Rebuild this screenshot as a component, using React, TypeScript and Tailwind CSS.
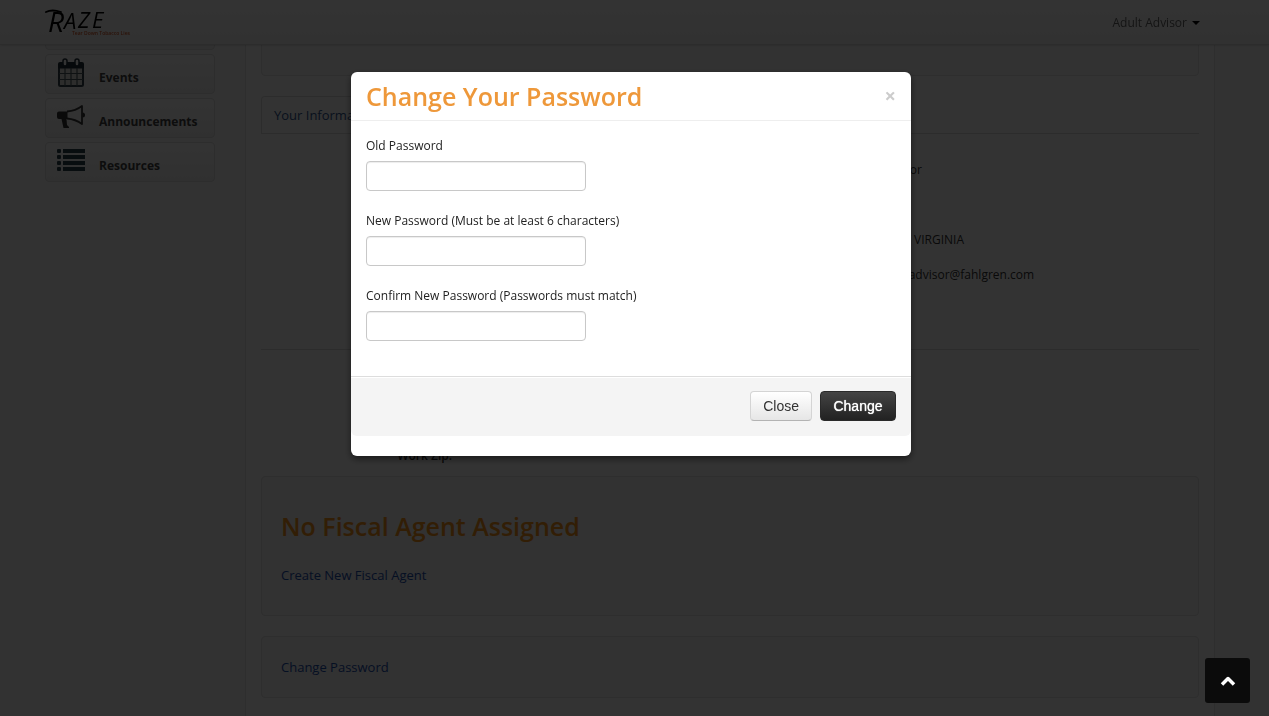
import type { ReactNode } from "react";

const fields = [
  { id: "old-password", label: "Old Password" },
  { id: "new-password", label: "New Password (Must be at least 6 characters)" },
  { id: "confirm-password", label: "Confirm New Password (Passwords must match)" },
];

function CalendarIcon() {
  return (
    <svg width="28" height="30" viewBox="0 0 28 30" aria-hidden="true">
      <rect x="2" y="6" width="24" height="22" rx="1.5" fill="#dfe2da" stroke="#33424a" strokeWidth="2" />
      <path d="M1 10.500V6a2 2 0 0 1 2-2h22a2 2 0 0 1 2 2v4.500z" fill="#22303a" />
      <path d="M8 10v18M14 10v18M20 10v18M2 15.500h24M2 21.500h24" stroke="#4c5a60" strokeWidth="1.2" />
      <rect x="6" y="1" width="4" height="7" rx="2" fill="#fff" stroke="#22303a" strokeWidth="1.5" />
      <rect x="18" y="1" width="4" height="7" rx="2" fill="#fff" stroke="#22303a" strokeWidth="1.5" />
    </svg>
  );
}

function MegaphoneIcon() {
  return (
    <svg width="28" height="24" viewBox="0 0 28 24" aria-hidden="true">
      <path d="M10 6.500C16 6 21 4 25 1v18c-4-3-9-5-15-5.500" fill="none" stroke="#3a3a3a" strokeWidth="1.8" strokeLinejoin="round" />
      <path d="M2 6.500h8.500v7.500H9.500l.5 6 2 2v1H6.500l-2-9H2a2 2 0 0 1-2-2v-3.500a2 2 0 0 1 2-2z" fill="#333" />
      <path d="M25.500 7.500q2.500 0 2.500 2.500t-2.500 2.500z" fill="#333" />
    </svg>
  );
}

function ListIcon() {
  return (
    <svg width="28" height="26" viewBox="0 0 28 26" aria-hidden="true" fill="#2c404e">
      {[1, 7, 13, 19].map((y) => (
        <g key={y}>
          <rect x="0" y={y} width="4" height="4" rx="1" />
          <rect x="6" y={y} width="22" height="4" />
        </g>
      ))}
    </svg>
  );
}

function Logo() {
  return (
    <svg width="90" height="36" viewBox="0 0 90 36" role="img" aria-label="Raze">
      <path d="M1 8C5 6 10 6 16 8" fill="none" stroke="#000" strokeWidth="1.800" strokeLinecap="round" />
      <g fontFamily="Open Sans, sans-serif" fontStyle="italic" fill="#000">
        <text x="3" y="28" fontSize="28" fontWeight="500">R</text>
        <text x="19" y="25" fontSize="22">A</text>
        <text x="33" y="24" fontSize="22">Z</text>
        <text x="47" y="24" fontSize="22">E</text>
      </g>
      <text x="27" y="31" fontFamily="Open Sans, sans-serif" fontSize="5" fontWeight="600" fill="#d85a2c">
        Tear Down Tobacco Lies
      </text>
    </svg>
  );
}

function NavCard({ icon, children }: { icon?: ReactNode; children: ReactNode }) {
  return (
    <a
      href="#"
      className="flex h-10 items-start rounded border border-[#dedede] bg-linear-to-b from-white to-[#f0f0f0] pl-[11px] text-[12px] font-bold text-[#444]"
    >
      <span className="flex h-9 w-[42px] items-center">{icon}</span>
      <span className="pt-[14px] leading-[18px]">{children}</span>
    </a>
  );
}

function Detail({ label, children }: { label: string; children?: ReactNode }) {
  return (
    <div className="flex gap-5">
      <dt className="w-40 text-right font-semibold">{label}</dt>
      <dd>{children}</dd>
    </div>
  );
}

function Well({ className, children }: { className: string; children?: ReactNode }) {
  return <section className={`rounded border border-[#e3e3e3] bg-[#f7f7f7] px-[19px] ${className}`}>{children}</section>;
}

export default function App() {
  return (
    <div className="h-screen overflow-hidden bg-[#fafafa] font-['Open_Sans',sans-serif] text-[12px] leading-5 text-[#333]">
      <header className="fixed inset-x-0 top-0 z-10 border-b border-[#d9d9d9] bg-linear-to-b from-white to-[#f4f4f4] pr-[9px] shadow-sm">
        <div className="mx-auto flex h-11 max-w-[1170px] items-center justify-between">
          <a href="#" className="block">
            <Logo />
          </a>
          <button type="button" className="mt-[2px] mr-[15px] flex items-center gap-[5px] text-[#666]">
            Adult Advisor
            <span className="border-x-4 border-t-4 border-x-transparent border-t-black" />
          </button>
        </div>
      </header>

      <div className="pr-[9px]">
        <div className="mx-auto flex max-w-[1170px]">
          <nav className="mr-[30px] flex w-[170px] flex-col gap-1 pt-[10px]">
            <NavCard>Dashboard</NavCard>
            <NavCard icon={<CalendarIcon />}>Events</NavCard>
            <NavCard icon={<MegaphoneIcon />}>Announcements</NavCard>
            <NavCard icon={<ListIcon />}>Resources</NavCard>
          </nav>

          <main className="min-w-0 flex-1 border-x border-[#e3e3e3] bg-white px-[15px]">
            <Well className="h-[76px]" />
            <div className="mt-5 flex border-b border-[#ddd]">
              <a href="#" className="rounded-t border-x border-t border-[#ddd] px-3 py-2 text-[13px] text-[#2f5590]">
                Your Information
              </a>
            </div>
            <dl className="grid grid-cols-2 border-b border-[#ddd] pt-[26px] pb-16">
              <div className="flex flex-col gap-[15px] pl-[31px]">
                <Detail label="First Name:">Adult</Detail>
                <Detail label="Address:" />
                <Detail label="City:" />
                <Detail label="Zip:" />
              </div>
              <div className="-ml-[30px] flex flex-col gap-[15px]">
                <Detail label="Last Name:">Advisor</Detail>
                <Detail label="Address 2:">&nbsp;</Detail>
                <Detail label="State:">WEST VIRGINIA</Detail>
                <Detail label="Email:">adultadvisor@fahlgren.com</Detail>
              </div>
            </dl>
            <dl className="flex flex-col gap-[15px] pt-[26px] pb-[10px] pl-[31px]">
              <Detail label="Work Address:" />
              <Detail label="Work City:" />
              <Detail label="Work Zip:" />
            </dl>
            <Well className="h-[140px] pt-[29px]">
              <h2 className="text-[25px] leading-10 font-semibold text-[#f7941d]">No Fiscal Agent Assigned</h2>
              <a href="#" className="mt-[19px] block text-[13px] text-[#1d4fb0]">
                Create New Fiscal Agent
              </a>
            </Well>
            <Well className="mt-5 mb-5 h-[62px] pt-5">
              <a href="#" className="block text-[13px] text-[#1d4fb0]">
                Change Password
              </a>
            </Well>
          </main>
        </div>
      </div>

      <div className="fixed inset-0 z-20 bg-black/80 pt-[72px] pr-[7px]">
        <div
          role="dialog"
          aria-labelledby="dialog-title"
          className="mx-auto max-w-[560px] rounded-md bg-white pb-5 shadow-[0_3px_7px_rgba(0,0,0,0.5)]"
        >
          <div className="flex items-center justify-between border-b border-[#eee] px-[15px] py-1">
            <h3 id="dialog-title" className="text-[25px] leading-10 font-semibold text-[#ee983a]">
              Change Your Password
            </h3>
            <button type="button" aria-label="Close dialog" className="text-[20px] leading-5 font-bold text-[#ccc]">
              ×
            </button>
          </div>
          <form>
            <div className="flex flex-col gap-5 px-[15px] pt-[15px] pb-[35px]">
              {fields.map(({ id, label }) => (
                <div key={id}>
                  <label htmlFor={id} className="mb-[5px] block text-[#222]">
                    {label}
                  </label>
                  <input
                    id={id}
                    type="password"
                    className="block h-[30px] w-[220px] rounded border border-[#c8c8c8] bg-white px-[6px] shadow-[inset_0_1px_1px_rgba(0,0,0,0.075)]"
                  />
                </div>
              ))}
            </div>
            <div className="flex justify-end gap-2 rounded-b-md border-t border-[#ddd] bg-[#f4f4f4] px-[15px] pt-[14px] pb-[15px] font-['Liberation_Sans',sans-serif] text-[14px] shadow-[inset_0_1px_0_#fff]">
              <button
                type="button"
                className="rounded border border-[#d4d4d4] border-b-[#b3b3b3] bg-linear-to-b from-white to-[#e6e6e6] px-3 py-1 text-[#333]"
              >
                Close
              </button>
              <button
                type="submit"
                className="min-w-[76px] rounded border border-[#2a2a2a] bg-linear-to-b from-[#444] to-[#222] px-3 py-1 text-white [text-shadow:0_0_1px_#fff]"
              >
                Change
              </button>
            </div>
          </form>
        </div>
      </div>

      <button
        type="button"
        aria-label="Back to top"
        className="fixed right-[19px] bottom-[13px] z-30 flex size-[45px] items-center justify-center rounded-[3px] bg-[#0b0b0b]"
      >
        <svg width="16" height="12" viewBox="0 0 16 12" fill="none" stroke="#fff" strokeWidth="3.500" strokeLinejoin="round" aria-hidden="true">
          <path d="M2 9.500 8 3.500l6 6" />
        </svg>
      </button>
    </div>
  );
}
